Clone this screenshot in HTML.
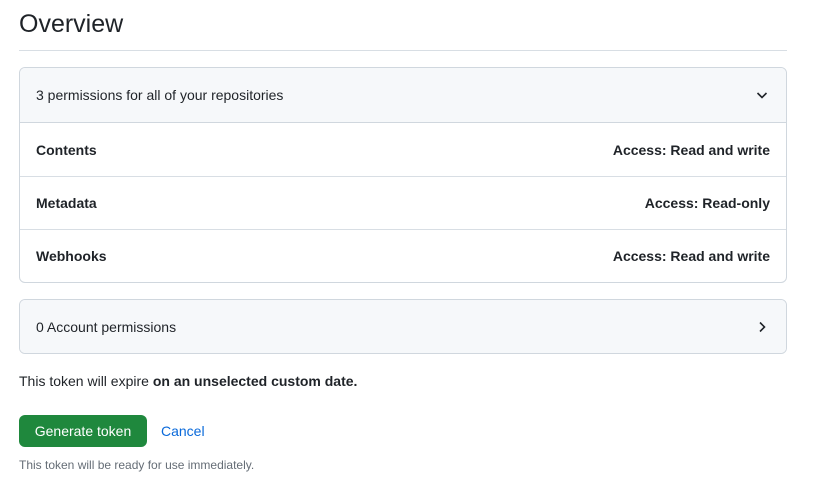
<!DOCTYPE html><html><head><style>
body{margin:0;width:813px;height:496px;background:#fff;font-family:"Liberation Sans",sans-serif;color:#1f2328;position:relative;overflow:hidden}
.a{position:absolute}
h1{position:absolute;left:19px;top:10px;margin:0;font-size:25px;font-weight:400}
.hr{left:19px;top:50px;width:768px;height:1px;background:#d8dee4}
.box{left:19px;width:766px;border:1px solid #d0d7de;border-radius:6px;overflow:hidden}
.hd{background:#f6f8fa;height:54px;display:flex;align-items:center;padding:0 16px;font-size:14px;justify-content:space-between}
.row{height:52px;display:flex;align-items:center;justify-content:space-between;padding:0 16px;font-size:14px;font-weight:700;border-top:1px solid #d8dee4}
</style></head><body>
<h1>Overview</h1>
<div class="a hr"></div>
<div class="a box" style="top:67px;height:214px">
<div class="hd" style="border-bottom:1px solid #d0d7de;height:54px">3 permissions for all of your repositories<svg width="16" height="16" viewBox="0 0 16 16"><path d="M3.5 6l4.5 4.5L12.5 6" fill="none" stroke="#1f2328" stroke-width="1.6"/></svg></div>
<div class="row" style="border-top:0;height:53px">Contents<span>Access: Read and write</span></div>
<div class="row">Metadata<span>Access: Read-only</span></div>
<div class="row">Webhooks<span>Access: Read and write</span></div>
</div>
<div class="a box" style="top:299px;height:53px">
<div class="hd" style="height:53px">0 Account permissions<svg width="16" height="16" viewBox="0 0 16 16"><path d="M6 3.5l4.5 4.5L6 12.5" fill="none" stroke="#1f2328" stroke-width="1.6"/></svg></div>
</div>
<div class="a" style="left:19px;top:373px;font-size:14px">This token will expire <b>on an unselected custom date.</b></div>
<div class="a" style="left:19px;top:415px;width:128px;height:32px;background:#1f883d;border-radius:6px;color:#fff;font-size:14px;line-height:32px;text-align:center">Generate token</div>
<div class="a" style="left:161px;top:423px;font-size:14px;color:#0969da">Cancel</div>
<div class="a" style="left:19px;top:458px;font-size:12px;color:#656d76">This token will be ready for use immediately.</div>
</body></html>
